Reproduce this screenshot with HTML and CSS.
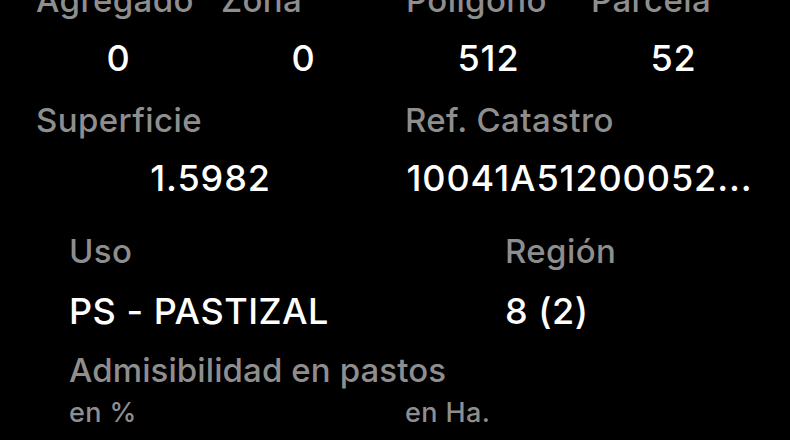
FILE: index.html
```html
<!DOCTYPE html>
<html lang="es">
<head>
    <meta charset="UTF-8">
    <meta name="viewport" content="width=device-width, initial-scale=1.0">
    <title>Parcela</title>
    <link rel="stylesheet" href="styles.css">
</head>
<body>

<div class="sheet">
    <div class="row four">
        <div class="field">
            <div class="label">Agregado</div>
            <div class="value">0</div>
        </div>
        <div class="field">
            <div class="label">Zona</div>
            <div class="value">0</div>
        </div>
        <div class="field">
            <div class="label">Poligono</div>
            <div class="value">512</div>
        </div>
        <div class="field">
            <div class="label">Parcela</div>
            <div class="value">52</div>
        </div>
    </div>

    <div class="row two">
        <div class="field">
            <div class="label">Superficie</div>
            <div class="value">1.5982</div>
        </div>
        <div class="field">
            <div class="label">Ref. Catastro</div>
            <div class="value">10041A51200052...</div>
        </div>
    </div>

    <div class="section">
        <div class="row usage">
            <div class="field left">
                <div class="label">Uso</div>
                <div class="value">PS - PASTIZAL</div>
            </div>
            <div class="field left">
                <div class="label">Región</div>
                <div class="value">8 (2)</div>
            </div>
        </div>

        <div class="label title">Admisibilidad en pastos</div>
        <div class="row units">
            <div class="unit">en %</div>
            <div class="unit">en Ha.</div>
        </div>
    </div>
</div>

</body>
</html>
```

FILE: styles.css
```css
body {
    background-color: #000000;
    color: #FFFFFF;
    font-family: Inter, "Noto Sans", sans-serif;
    margin: 0;
    height: 100vh;
    overflow: hidden;
}

.sheet {
    padding: 0 36px;
    margin-top: -20px;
}

.row {
    display: grid;
}

.four {
    grid-template-columns: repeat(4, 165px);
    column-gap: 20px;
}

.two {
    grid-template-columns: 349px 349px;
    column-gap: 20px;
    margin-top: 20px;
}

.field {
    display: flex;
    flex-direction: column;
    min-width: 0;
}

.label {
    color: #8E8E8E;
    font-size: 33px;
    font-weight: 500;
    letter-spacing: 0.4px;
    line-height: 40px;
}

.value {
    font-size: 36px;
    font-weight: 500;
    letter-spacing: 0.9px;
    line-height: 44px;
    margin-top: 16px;
    text-align: center;
    white-space: nowrap;
    overflow: hidden;
    text-overflow: ellipsis;
}

.section {
    padding-left: 33px;
    margin-top: 31px;
}

.usage {
    grid-template-columns: 436px 1fr;
}

.left .value {
    text-align: left;
    letter-spacing: 0.5px;
    margin-top: 18px;
}

.title {
    letter-spacing: 0.1px;
    margin-top: 17px;
}

.units {
    grid-template-columns: 336px 1fr;
    margin-top: 7px;
}

.unit {
    color: #8E8E8E;
    font-size: 27px;
    font-weight: 500;
    letter-spacing: 0.4px;
    line-height: 32px;
}
```
